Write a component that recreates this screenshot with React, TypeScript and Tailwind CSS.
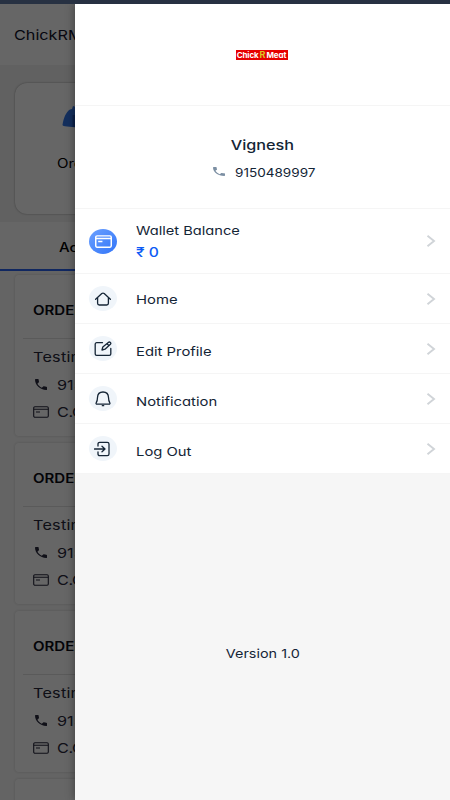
import type { ReactNode } from 'react';

const FONT = "font-['Inter','Noto_Sans',sans-serif] [font-feature-settings:'cv11']";

function PhoneIcon({ className }: { className: string }) {
  return (
    <svg viewBox="3 3 18 18" preserveAspectRatio="none" fill="currentColor" className={className}>
      <path d="M20 15.5c-1.2 0-2.4-.2-3.6-.6-.3-.1-.7 0-1 .2l-2.2 2.2c-2.8-1.4-5.1-3.8-6.6-6.6l2.2-2.2c.3-.3.4-.7.2-1C8.7 6.4 8.5 5.2 8.5 4c0-.5-.5-1-1-1H4c-.5 0-1 .5-1 1 0 9.4 7.6 17 17 17 .5 0 1-.5 1-1v-3.5c0-.5-.5-1-1-1z" />
    </svg>
  );
}

function CardIcon({ className, strokeWidth = 1.1 }: { className: string; strokeWidth?: number }) {
  return (
    <svg viewBox="0 0 16 12" fill="none" stroke="currentColor" strokeWidth={strokeWidth} className={className}>
      <rect x=".7" y=".7" width="14.6" height="10.6" rx="1.2" />
      <path d="M.7 3.2h14.6M3 6h4" />
    </svg>
  );
}

function Chevron() {
  return (
    <svg viewBox="0 0 10 14" fill="none" stroke="#d0d4d8" strokeWidth="1.9" className="mr-[14px] h-[14px] w-[10px]">
      <path d="M1.5 1.8 8 7l-6.5 5.2" />
    </svg>
  );
}

function IconDisc({ children }: { children: ReactNode }) {
  return (
    <span className="flex h-[25px] w-7 items-center justify-center rounded-[50%] bg-[#f0f5fa]">
      <svg viewBox="0 0 18 16" fill="none" stroke="#152536" strokeWidth="1.3" strokeLinecap="round" strokeLinejoin="round" className="h-4 w-[18px]">
        {children}
      </svg>
    </span>
  );
}

const MENU = [
  {
    label: 'Home',
    icon: <path d="M1.6 8.2 7.8 2.6c.8-.6 1.6-.6 2.4 0l6.2 5.6M3.6 6.6v5.7c0 1 .7 1.7 1.7 1.7h7.4c1 0 1.7-.7 1.7-1.7V6.6" />,
    shift: 'pt-[3px]',
  },
  {
    label: 'Edit Profile',
    icon: (
      <>
        <path d="M8.5 1.7H2.7c-.9 0-1.5.6-1.5 1.4v9.8c0 .8.6 1.4 1.5 1.4h12.6c.9 0 1.5-.6 1.5-1.4V7.5" />
        <path d="m8 9 .8-3 5.5-4.6c.7-.6 1.500-.5 2.100 0 .6.6.6 1.300 0 1.900L11 8.200 8 9ZM13 2.800l1.900 1.600" />
      </>
    ),
    shift: 'pt-[7px]',
  },
  {
    label: 'Notification',
    icon: <path d="M2.3 11.5c1-1.4 1.1-2.5 1.2-5.1C3.6 3.2 5.8 1 9 1s5.4 2.2 5.5 5.4c.1 2.6.2 3.7 1.2 5.1.6.9.2 1.7-.9 1.7H3.2c-1.1 0-1.5-.8-.9-1.7ZM8.3 14.7h1.4" />,
    shift: 'pt-[7px]',
  },
  {
    label: 'Log Out',
    icon: <path d="M4 5V3c0-1 .7-1.7 1.7-1.7h7.6c1 0 1.7.7 1.7 1.7v10c0 1-.7 1.7-1.7 1.7H5.7C4.7 14.7 4 14 4 13v-2M.5 8h10M8 5.2 11 8l-3 2.8" />,
    shift: 'pt-[7px]',
  },
];

function OrderCard() {
  return (
    <div className="h-[161px] shrink-0 rounded-[4px] bg-white pl-[8px] shadow-[0_0_3px_rgba(0,0,0,0.16)]">
      <div className="flex h-[64px] items-center border-b border-[#e0e0e0] pt-[9px] pl-[10px]">
        <span className="origin-left scale-x-[1.2] text-[12.5px] font-semibold text-[#0b0b14]">ORDER</span>
      </div>
      <div className="flex h-[37px] items-center pl-[10px] text-[#262638]">
        <span className="origin-left scale-x-[1.2] text-[13.5px] tracking-[0.2px]">Testing</span>
      </div>
      <div className="flex h-[18px] items-center pl-[12px] text-[#28283c]">
        <PhoneIcon className="mr-[10px] mb-[2px] h-[11px] w-[12px] shrink-0" />
        <span className="origin-left scale-x-[1.2] text-[13.5px]">9150489997</span>
      </div>
      <div className="mt-[9px] flex h-[18px] items-center pl-[10px] text-[#28283c]">
        <CardIcon className="mr-[8px] h-3 w-4 shrink-0" />
        <span className="origin-left scale-x-[1.2] pt-px text-[13.5px] tracking-[-0.3px] whitespace-nowrap">C.O.D</span>
      </div>
    </div>
  );
}

function OrdersPage() {
  return (
    <div className="flex h-[796px] flex-col overflow-hidden bg-[#fafafa]">
      <header className="flex h-[61px] shrink-0 items-center bg-white pt-[2px] pl-[14px]">
        <span className="origin-left scale-x-[1.2] text-[13.5px] text-[#10102a]">ChickRMeat</span>
      </header>
      <section className="h-[157px] shrink-0 bg-[#f2f2f2] pt-[18px] pl-[15px]">
        <div className="h-[131px] rounded-[12px] bg-white pl-[42px] shadow-[0_0_2px_rgba(0,0,0,0.4)]">
          <svg viewBox="0 0 36 24" className="ml-[5px] h-[46px] w-[36px] pt-[22px]">
            <path d="M.5 20C1.5 13 4 7 8 4.5L10 4 11 1 20 4v19L5 21.5C2 21 .5 21 .5 20Z" fill="#3477e8" />
            <path d="M13 10v12" stroke="#1f54b8" strokeWidth="5" />
          </svg>
          <span className="mt-[26px] block w-fit origin-left scale-x-[1.2] text-[12.5px] text-black">Orders</span>
        </div>
      </section>
      <div className="flex h-[49px] shrink-0 items-center border-b-2 border-[#2962ef] bg-white pt-[5px] pl-[59px]">
        <span className="origin-left scale-x-[1.2] text-[12.5px] font-medium text-black">Active</span>
      </div>
      <div className="flex flex-col gap-[7px] pt-1 pl-[15px]">
        <OrderCard />
        <OrderCard />
        <OrderCard />
        <div className="h-[40px] rounded-[4px] bg-white shadow-[0_0_3px_rgba(0,0,0,0.16)]" />
      </div>
    </div>
  );
}

function Drawer() {
  return (
    <aside className="absolute inset-y-0 right-0 mt-1 w-[375px] bg-[#f6f6f6] text-[#142536] shadow-[-1px_0_8px_rgba(0,0,0,0.35)]">
      <div className="flex h-[102px] items-center justify-center border-b border-[#f5f5f5] bg-white pr-[2px]">
        <div className="flex h-[10px] w-[52px] items-center justify-center bg-[#e60000] text-[8px] leading-none font-bold whitespace-nowrap text-white">
          <span className="tracking-[-0.1px]">Chick</span>
          <span className="px-px text-[9px] text-[#d8c422]">R</span>
          <span className="tracking-[-0.1px]">Meat</span>
        </div>
      </div>
      <div className="flex h-[103px] flex-col items-center border-b border-[#f5f5f5] bg-white pt-[29px]">
        <span className="scale-x-[1.2] text-[13.5px] leading-5 font-medium">Vignesh</span>
        <div className="mt-[6px] flex w-[100px] items-center leading-5">
          <PhoneIcon className="mr-[10px] mb-px h-[9px] w-[12px] shrink-0 text-[#7c8fa3]" />
          <span className="origin-left scale-x-[1.13] pt-[2px] text-[12px]">9150489997</span>
        </div>
      </div>
      <div className="flex h-[65px] items-center border-b border-[#f5f5f5] bg-white pl-[14px]">
        <span className="flex h-[25px] w-7 items-center justify-center rounded-[50%] bg-gradient-to-br from-[#6ba0ff] to-[#3174f8] text-white">
          <CardIcon className="h-[13px] w-[17px]" strokeWidth={1.4} />
        </span>
        <div className="ml-[19px] flex flex-1 flex-col items-start">
          <span className="origin-left scale-x-[1.22] pt-px text-[12px] leading-[22px]">Wallet Balance</span>
          <span className="origin-left scale-x-[1.2] text-[13px] leading-[21px] font-medium text-[#0d5bf5]">₹ 0</span>
        </div>
        <Chevron />
      </div>
      {MENU.map((item) => (
        <div key={item.label} className="flex h-[50px] items-center border-b border-[#f5f5f5] bg-white pl-[14px]">
          <IconDisc>{item.icon}</IconDisc>
          <div className={`ml-[19px] flex flex-1 ${item.shift}`}>
            <span className="origin-left scale-x-[1.235] text-[12px]">{item.label}</span>
          </div>
          <Chevron />
        </div>
      ))}
      <p className="pt-[170px] text-center text-[12px] leading-5">
        <span className="inline-block scale-x-[1.2]">Version 1.0</span>
      </p>
    </aside>
  );
}

export default function App() {
  return (
    <div className={`relative h-[800px] w-[450px] overflow-hidden ${FONT}`}>
      <div className="h-1 bg-[#566b8c]" />
      <OrdersPage />
      <div className="absolute inset-0 top-1 bg-black/60" />
      <Drawer />
      <div className="absolute inset-x-0 top-0 h-1 bg-[#273142]" />
    </div>
  );
}
